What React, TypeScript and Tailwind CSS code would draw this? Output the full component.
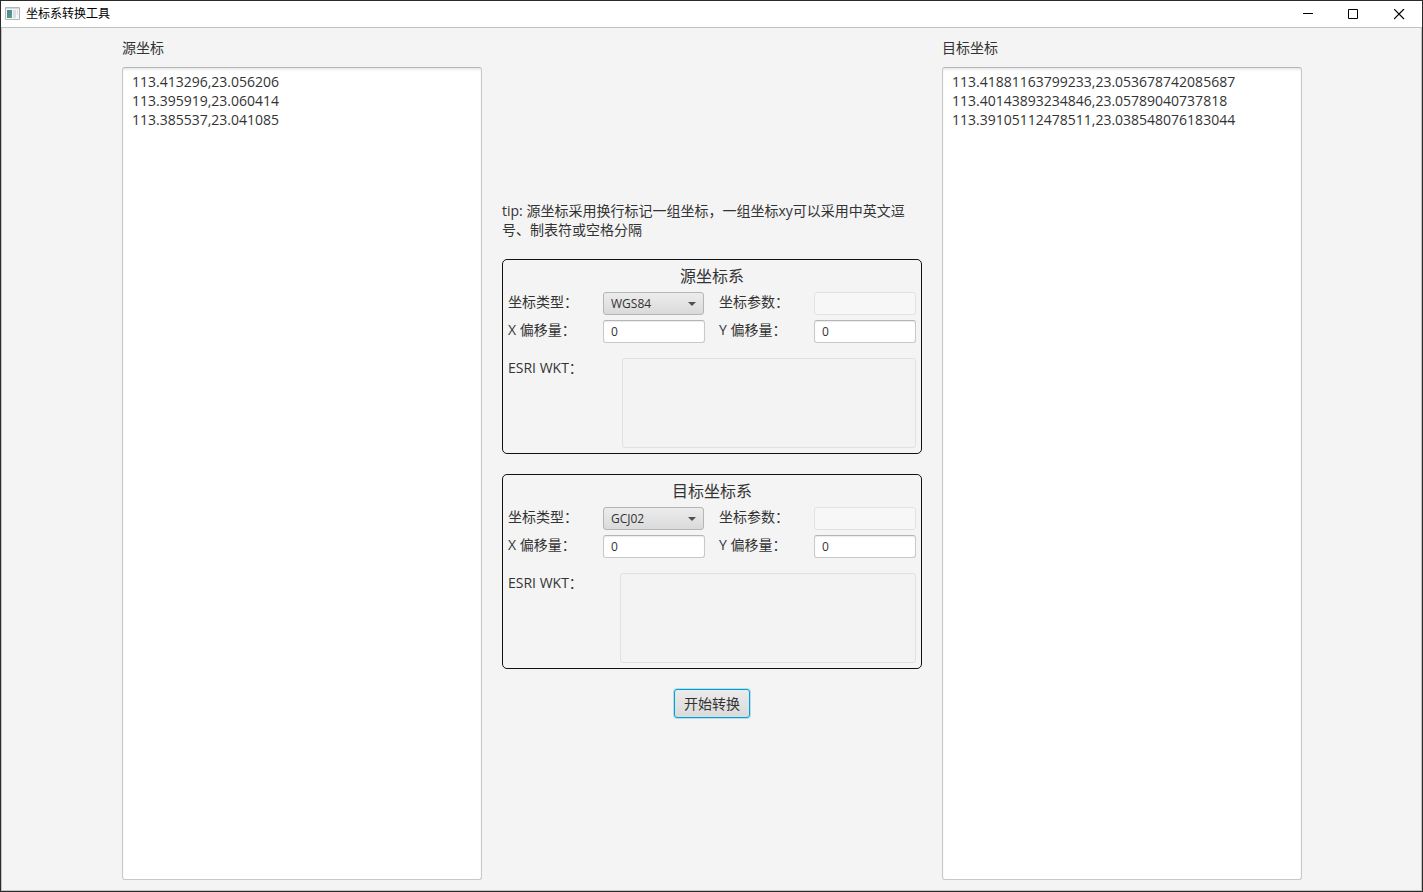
import { useState } from 'react';
import type { ReactNode } from 'react';

const COORD_TYPES = ['WGS84', 'GCJ02', 'BD09', 'CGCS2000'];

const SOURCE_TEXT = `113.413296,23.056206
113.395919,23.060414
113.385537,23.041085`;

const TARGET_TEXT = `113.41881163799233,23.053678742085687
113.40143893234846,23.05789040737818
113.39105112478511,23.038548076183044`;

function AppIcon() {
  return (
    <svg width="16" height="14" viewBox="0 0 16 14" aria-hidden="true">
      <defs>
        <linearGradient id="icon-pane" x1="0" y1="0" x2="1" y2="1">
          <stop offset="0" stopColor="#4f7fa8" />
          <stop offset="1" stopColor="#55a07c" />
        </linearGradient>
      </defs>
      <path d="M0.5 0.5h14v12h-14z" fill="#f6f7f7" stroke="#b3b7ba" />
      <path d="M1 1h13v1H1z" fill="#d3d7da" />
      <path d="M2 3h5v8H2z" fill="url(#icon-pane)" />
      <path d="M8 3h3v8H8zM12 3h1v5h-1z" fill="#dcdfe1" />
    </svg>
  );
}

function WindowButton({ label, children }: { label: string; children: ReactNode }) {
  return (
    <button aria-label={label} className="flex w-[46px] items-center justify-center hover:bg-gray-200">
      <svg width="11" height="11" viewBox="0 0 11 11" fill="none" stroke="#000" aria-hidden="true">
        {children}
      </svg>
    </button>
  );
}

function TitleBar() {
  return (
    <header className="flex h-[27px] items-stretch border-b border-[#c3c3c3] bg-white">
      <div className="flex flex-1 items-center gap-[5px] pl-1">
        <AppIcon />
        <h1 className="text-xs text-black">坐标系转换工具</h1>
      </div>
      <WindowButton label="最小化">
        <path d="M1 4.5h10" />
      </WindowButton>
      <WindowButton label="最大化">
        <path d="M0.5 0.5h9v9h-9z" />
      </WindowButton>
      <WindowButton label="关闭">
        <path d="M0 0l10 10M10 0L0 10" strokeWidth="1.2" />
      </WindowButton>
    </header>
  );
}

function CoordArea({ id, label, initial }: { id: string; label: string; initial: string }) {
  const [value, setValue] = useState(initial);
  return (
    <div className="flex flex-col gap-[10px]">
      <label htmlFor={id}>{label}</label>
      <textarea
        id={id}
        value={value}
        spellCheck={false}
        onChange={e => setValue(e.target.value)}
        className="w-full flex-1 resize-none rounded-[3px] border border-[#c8c8c8] border-t-[#b5b5b5] bg-white px-[9px] py-1 shadow-[inset_0_2px_2px_#ececec] outline-none"
      />
    </div>
  );
}

const fieldClass =
  'h-[23px] w-full min-w-0 rounded-[3px] border border-[#c8c8c8] border-t-[#b5b5b5] bg-white px-[7px] text-xs shadow-[inset_0_1px_1px_#ececec] outline-none disabled:border-[#e2e2e2] disabled:bg-[#f7f7f7] disabled:shadow-none';

function Field({ id, label, children }: { id: string; label: string; children: ReactNode }) {
  return (
    <div className="grid grid-cols-[95px_1fr]">
      <label htmlFor={id}>{label}</label>
      {children}
    </div>
  );
}

interface PanelProps {
  id: string;
  title: string;
  initialType: string;
  wktGrid: string;
}

function CoordSystemPanel({ id, title, initialType, wktGrid }: PanelProps) {
  const [type, setType] = useState(initialType);
  const [dx, setDx] = useState('0');
  const [dy, setDy] = useState('0');

  return (
    <section className="rounded-[5px] border border-[#111] p-[5px]">
      <h2 className="text-center text-base leading-[22px]">{title}</h2>
      <div className="mt-[5px] grid grid-cols-2 gap-x-[14px] gap-y-[5px]">
        <Field id={`${id}-type`} label="坐标类型：">
          <div className="relative mr-px">
            <select
              id={`${id}-type`}
              value={type}
              onChange={e => setType(e.target.value)}
              className="block h-[23px] w-full appearance-none rounded-[3px] border border-[#b5b5b5] bg-linear-to-b from-[#ececec] to-[#dadada] pt-px pr-5 pl-[7px] text-xs outline-none"
            >
              {COORD_TYPES.map(t => (
                <option key={t}>{t}</option>
              ))}
            </select>
            <svg
              width="8"
              height="4"
              viewBox="0 0 8 4"
              aria-hidden="true"
              className="pointer-events-none absolute top-[10px] right-2"
            >
              <path d="M0 0h8L4 4z" fill="#505050" />
            </svg>
          </div>
        </Field>
        <Field id={`${id}-param`} label="坐标参数：">
          <input id={`${id}-param`} disabled className={fieldClass} />
        </Field>
        <Field id={`${id}-dx`} label="X 偏移量：">
          <input id={`${id}-dx`} value={dx} onChange={e => setDx(e.target.value)} className={fieldClass} />
        </Field>
        <Field id={`${id}-dy`} label="Y 偏移量：">
          <input id={`${id}-dy`} value={dy} onChange={e => setDy(e.target.value)} className={fieldClass} />
        </Field>
      </div>
      <div className={`mt-[15px] grid ${wktGrid}`}>
        <label htmlFor={`${id}-wkt`}>ESRI WKT：</label>
        <textarea
          id={`${id}-wkt`}
          disabled
          className="block h-[90px] w-full resize-none rounded-[3px] border border-[#e0e0e0] bg-[#f3f3f3]"
        />
      </div>
    </section>
  );
}

export default function App() {
  return (
    <div className="flex min-h-dvh flex-col border border-[#2b2b2b] bg-[#f4f4f4] font-['Open_Sans','Noto_Sans_CJK_SC',sans-serif] text-sm leading-[19px] text-[#333]">
      <TitleBar />
      <main className="flex flex-1 flex-col border-x border-b border-[#c3c3c3] py-[10px] pl-px">
        <div className="mx-auto grid w-full max-w-[1180px] flex-1 grid-cols-[6fr_7fr_6fr] gap-5">
          <CoordArea id="source" label="源坐标" initial={SOURCE_TEXT} />
          <div className="flex flex-col justify-center gap-5">
            <p>tip: 源坐标采用换行标记一组坐标，一组坐标xy可以采用中英文逗号、制表符或空格分隔</p>
            <CoordSystemPanel id="src" title="源坐标系" initialType="WGS84" wktGrid="grid-cols-[114px_1fr]" />
            <CoordSystemPanel id="dst" title="目标坐标系" initialType="GCJ02" wktGrid="grid-cols-[112px_1fr]" />
            <button className="self-center rounded-[3px] border border-[#039ed3] bg-linear-to-b from-[#ececec] to-[#dadada] px-[9px] py-1 shadow-[0_0_0_1px_#b5dfef]">
              开始转换
            </button>
          </div>
          <CoordArea id="target" label="目标坐标" initial={TARGET_TEXT} />
        </div>
      </main>
    </div>
  );
}
